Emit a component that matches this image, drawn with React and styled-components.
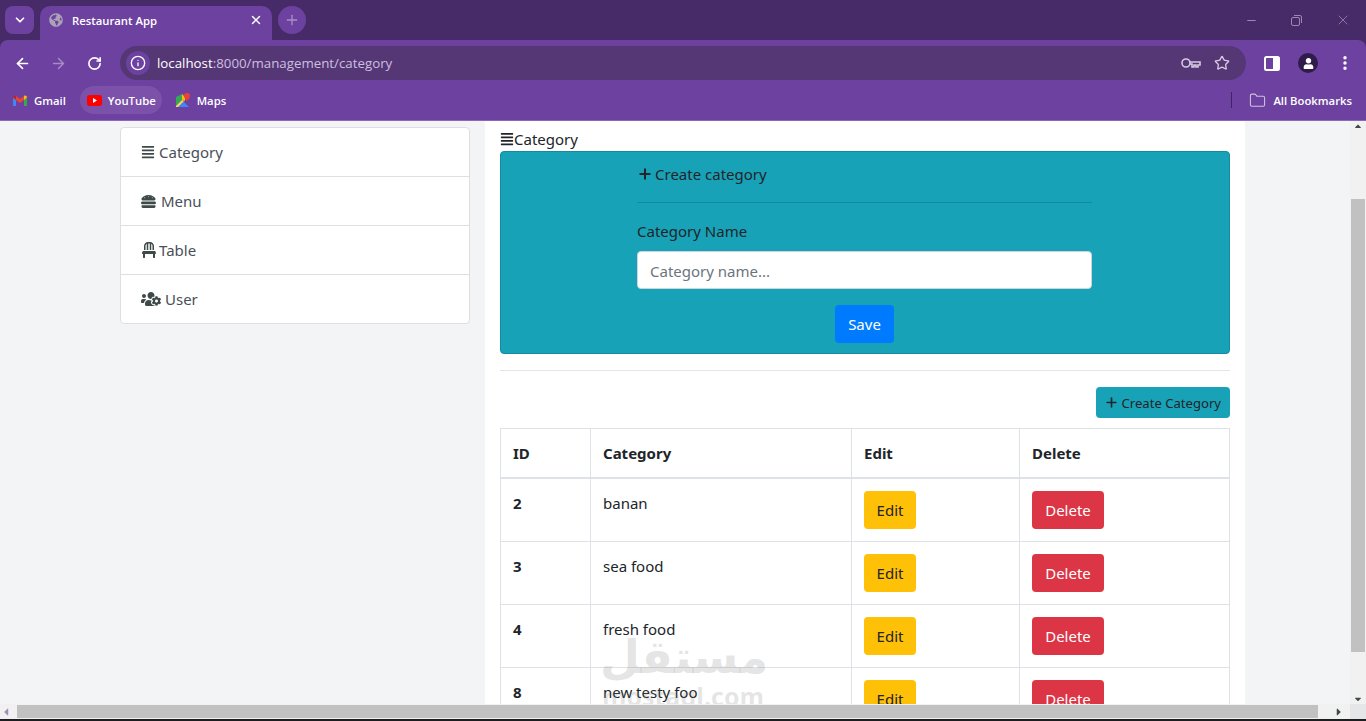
import React from "react";
import styled, { createGlobalStyle } from "styled-components";
import { ArrowLeft, ArrowRight, RotateCw, Info, Star, EllipsisVertical, Folder, ChevronDown, X, Plus, Minus } from "lucide-react";
import { FaAlignJustify, FaHamburger, FaChair, FaUsersCog, FaUser, FaGlobeAmericas, FaCaretLeft, FaCaretRight, FaCaretUp, FaCaretDown } from "react-icons/fa";

const GlobalStyle = createGlobalStyle`
  html, body { margin: 0; padding: 0; height: 100%; overflow: hidden; }
  * { box-sizing: border-box; }
`;

const Screen = styled.div`
  width: 1366px;
  height: 721px;
  display: flex;
  flex-direction: column;
  overflow: hidden;
  background: #1d1d1f;
  font-family: "Noto Sans", "Open Sans", sans-serif;
`;

/* browser chrome */
const Chrome = styled.header`
  flex: none;
  background: #472b69;
`;

const TabStrip = styled.div`
  height: 40px;
  display: flex;
  align-items: flex-start;
  padding: 6px 0 0 5px;
  color: #fff;
`;

const TabMenu = styled.div`
  width: 29px;
  height: 28px;
  border-radius: 8px;
  background: #6d41a0;
  display: flex;
  align-items: center;
  justify-content: center;
`;

const Tab = styled.div`
  width: 232px;
  height: 34px;
  margin-left: 6px;
  padding: 0 9px 6px 9px;
  border-radius: 10px 10px 0 0;
  background: #6d41a0;
  display: flex;
  align-items: center;
  gap: 9px;
  font: 600 11.3px "Open Sans", sans-serif;
`;

const TabTitle = styled.span`
  flex: 1;
`;

const NewTab = styled.div`
  width: 28px;
  height: 28px;
  margin-left: 6px;
  border-radius: 50%;
  background: #6d41a0;
  color: #a98fc6;
  display: flex;
  align-items: center;
  justify-content: center;
`;

const WindowControls = styled.div`
  margin-left: auto;
  margin-right: -1px;
  height: 28px;
  width: 138px;
  display: flex;
  align-items: center;
  justify-content: space-around;
  color: #9c88b4;
`;

const ToolbarArea = styled.div`
  background: #6d41a0;
  border-radius: 8px 8px 0 0;
  border-bottom: 1px solid #8d68b8;
`;

const Toolbar = styled.div`
  height: 46px;
  display: flex;
  align-items: center;
  padding: 0 0 0 13px;
  color: #fff;
`;

const NavButton = styled.div`
  width: 18px;
  height: 18px;
  margin-right: 18px;
  display: flex;
  align-items: center;
  justify-content: center;
  color: ${(p) => (p.$dim ? "#a78cc7" : "#fff")};
`;

const Omnibox = styled.div`
  width: 1126px;
  height: 34px;
  margin-left: -1px;
  border-radius: 17px;
  background: #553775;
  display: flex;
  align-items: center;
  padding: 0 16px 0 6px;
`;

const InfoChip = styled.div`
  width: 24px;
  height: 24px;
  border-radius: 50%;
  background: #6d41a0;
  display: flex;
  align-items: center;
  justify-content: center;
`;

const Url = styled.div`
  flex: 1;
  margin-left: 7px;
  font: 13.3px "Open Sans", sans-serif;
  color: #cdbfe0;
`;

const UrlHost = styled.span`
  color: #fff;
`;

const OmniIcon = styled.div`
  margin-left: 13px;
  display: flex;
  color: #d5cbe2;
`;

const ToolbarRight = styled.div`
  display: flex;
  align-items: center;
  margin-left: 18px;
  gap: 18px;
`;

const ProfileBadge = styled.div`
  width: 20px;
  height: 20px;
  border-radius: 50%;
  background: #2f1c4a;
  color: #fff;
  display: flex;
  align-items: center;
  justify-content: center;
`;

const BookmarkBar = styled.div`
  height: 34px;
  display: flex;
  align-items: flex-start;
  padding: 0 8px 0 6px;
  color: #fff;
  font: 600 11.3px/27px "Open Sans", sans-serif;
`;

const Bookmark = styled.div`
  height: 28px;
  padding: 0 6px 0 7px;
  margin-right: ${(p) => p.$gap}px;
  border-radius: 14px;
  background: ${(p) => (p.$active ? "#7b51aa" : "transparent")};
  display: flex;
  align-items: center;
  gap: ${(p) => p.$iconGap || 6}px;
`;

const BarSeparator = styled.div`
  width: 1px;
  height: 16px;
  margin: 6px 10px 0 auto;
  background: #3f2560;
`;

/* page */
const Viewport = styled.div`
  flex: none;
  height: 583px;
  display: flex;
  overflow: hidden;
  position: relative;
`;

const Page = styled.div`
  flex: 1;
  display: flex;
  align-items: flex-start;
  padding-left: 120px;
  background: #f3f4f6;
  font-size: 15px;
  line-height: 24px;
  color: #212529;
  overflow: hidden;
`;

const Sidebar = styled.nav`
  width: 350px;
  margin-top: 6px;
  background: #fff;
  border: 1px solid #dfdfe1;
  border-radius: 4px;
`;

const SideItem = styled.div`
  height: ${(p) => (p.$last ? 48 : 49)}px;
  padding: 0 20px;
  display: flex;
  align-items: center;
  gap: ${(p) => p.$gap || 4}px;
  color: #495057;
  border-bottom: ${(p) => (p.$last ? "0" : "1px solid #dfdfe1")};
  svg { color: #3f4a48; }
`;

const Main = styled.main`
  width: 760px;
  min-height: 900px;
  margin-left: 15px;
  padding: 7px 15px 0;
  background: #fff;
`;

const Heading = styled.div`
  display: flex;
  align-items: center;
  height: 21px;
  margin-bottom: 2px;
`;

const FormPanel = styled.section`
  height: 203px;
  padding: 10px 137px 0 136px;
  background: #17a2b8;
  border: 1px solid #148b9e;
  border-radius: 4px;
`;

const FormTitle = styled.div`
  display: flex;
  align-items: center;
  gap: 2px;
  height: 24px;
`;

const FormRule = styled.hr`
  margin: 16px 0 16px;
  border: 0;
  border-top: 1px solid #148a9d;
`;

const FieldLabel = styled.label`
  display: block;
  margin-bottom: 8px;
`;

const TextInput = styled.input`
  width: 100%;
  height: 38px;
  padding: 1px 12px 0;
  border: 1px solid #ced4da;
  border-radius: 4px;
  background: #fff;
  font: inherit;
  &::placeholder { color: #6c757d; opacity: 1; }
`;

const FormActions = styled.div`
  display: flex;
  justify-content: center;
  margin-top: 16px;
`;

const Button = styled.button`
  width: ${(p) => p.$width}px;
  height: 38px;
  padding: 0;
  border: 0;
  border-radius: 4px;
  background: ${(p) => p.$bg};
  color: ${(p) => p.$color || "#fff"};
  font: inherit;
  line-height: 24px;
`;

const SmallButton = styled.button`
  height: 31px;
  padding: 0 9px 0 8px;
  border: 0;
  border-radius: 4px;
  background: #17a2b8;
  color: #212529;
  font: 13.1px "Noto Sans", sans-serif;
  display: flex;
  align-items: center;
  gap: 3px;
`;

const Divider = styled.hr`
  margin: 16px 0;
  border: 0;
  border-top: 1px solid #e4e4e6;
`;

const ActionRow = styled.div`
  display: flex;
  justify-content: flex-end;
  margin-bottom: 10px;
`;

const Table = styled.table`
  width: 729px;
  border-collapse: collapse;
  table-layout: fixed;
`;

const HeadCell = styled.th`
  height: 49px;
  padding: 0 12px;
  border: 1px solid #dee2e6;
  border-bottom-width: 2px;
  text-align: left;
  font-weight: 700;
`;

const Cell = styled.td`
  height: 63px;
  padding: 12px;
  border: 1px solid #dee2e6;
  vertical-align: top;
  line-height: 24px;
  font-weight: ${(p) => (p.$bold ? 700 : 400)};
`;

/* watermark over the page */
const Watermark = styled.div`
  position: absolute;
  left: 600px;
  top: 510px;
  width: 166px;
  text-align: center;
  color: rgba(120, 120, 120, 0.2);
  pointer-events: none;
`;

const WatermarkArabic = styled.div`
  font: 700 46px/52px "DejaVu Sans", sans-serif;
`;

const WatermarkLatin = styled.div`
  font: 700 25px/26px "Open Sans", sans-serif;
`;

/* scrollbars */
const VScroll = styled.div`
  flex: none;
  width: 16px;
  background: #f1f1f1;
  display: flex;
  flex-direction: column;
  align-items: center;
  color: #3f4a48;
`;

const VThumb = styled.div`
  width: 14px;
  height: 453px;
  margin: 68px 0 auto;
  background: #c1c1c1;
`;

const HScroll = styled.div`
  flex: none;
  height: 15px;
  background: #f1f1f1;
  display: flex;
  align-items: center;
  color: #a08fb3;
`;

const HThumb = styled.div`
  width: 1301px;
  height: 13px;
  margin-left: 5px;
  margin-right: auto;
  background: #c1c1c1;
`;

const ScrollCorner = styled.div`
  width: 16px;
  height: 15px;
  margin-left: 5px;
  background: #e4e6e8;
`;

const rows = [
  { id: 2, name: "banan" },
  { id: 3, name: "sea food" },
  { id: 4, name: "fresh food" },
  { id: 8, name: "new testy foo" },
];

const GmailIcon = () => (
  <svg width="14" height="11" viewBox="0 0 14 11" fill="none">
    <path d="M0 2v8a1 1 0 0 0 1 1h2V4z" fill="#4285f4" />
    <path d="M14 2v8a1 1 0 0 1-1 1h-2V4z" fill="#34a853" />
    <path d="M3 5V1L7 4l4-3v4L7 8z" fill="#ea4335" />
    <path d="M0 2.5C0 .6 2 0 3 1v4z" fill="#c5221f" />
    <path d="M14 2.5C14 .6 12 0 11 1v4z" fill="#fbbc04" />
  </svg>
);

const YoutubeIcon = () => (
  <svg width="15" height="11" viewBox="0 0 15 11">
    <rect width="15" height="11" rx="2.5" fill="#f00" />
    <path d="M6 3l4 2.5L6 8z" fill="#fff" />
  </svg>
);

const MapsIcon = () => (
  <svg width="15" height="15" viewBox="0 0 15 15">
    <path d="M0 4l6-3v6L0 13z" fill="#34a853" />
    <path d="M6 1l3 3v4L6 7z" fill="#fbbc04" />
    <path d="M0 14l7-6 6 6z" fill="#4285f4" />
    <path d="M0 13l6-6 2 1-6 6H0z" fill="#fbd75b" />
    <path d="M11 0a3 3 0 0 1 3 3c0 2-3 5-3 5S8 5 8 3a3 3 0 0 1 3-3z" fill="#ea4335" />
  </svg>
);

const KeyIcon = () => (
  <svg width="20" height="12" viewBox="0 0 20 12" fill="none" stroke="currentColor" strokeWidth="1.6">
    <circle cx="5" cy="6" r="4" />
    <path d="M9 5h10v3h-2v2h-2V8h-2v2h-2V7H9" />
  </svg>
);

const PanelIcon = () => (
  <svg width="16" height="15" viewBox="0 0 16 15">
    <rect x="1" y="1" width="14" height="13" rx="1.5" fill="none" stroke="#fff" strokeWidth="2" />
    <rect x="9" y="1" width="6" height="13" fill="#fff" />
  </svg>
);

const RestoreIcon = () => (
  <svg width="11" height="11" viewBox="0 0 11 11" fill="none" stroke="currentColor">
    <rect x="0.5" y="2.5" width="8" height="8" rx="1.5" />
    <path d="M3 .5h6a1.5 1.5 0 0 1 1.5 1.5v6" />
  </svg>
);

export default function App() {
  return (
    <Screen>
      <GlobalStyle />
      <Chrome>
        <TabStrip>
          <TabMenu>
            <ChevronDown size={14} strokeWidth={3} />
          </TabMenu>
          <Tab>
            <FaGlobeAmericas size={14} color="#a9a3b5" />
            <TabTitle>Restaurant App</TabTitle>
            <X size={14} strokeWidth={2.5} />
          </Tab>
          <NewTab>
            <Plus size={16} />
          </NewTab>
          <WindowControls>
            <Minus size={13} />
            <RestoreIcon />
            <X size={16} strokeWidth={1.2} />
          </WindowControls>
        </TabStrip>
        <ToolbarArea>
          <Toolbar>
            <NavButton>
              <ArrowLeft size={17} strokeWidth={2.4} />
            </NavButton>
            <NavButton $dim>
              <ArrowRight size={17} strokeWidth={2} />
            </NavButton>
            <NavButton>
              <RotateCw size={15} strokeWidth={2.6} />
            </NavButton>
            <Omnibox>
              <InfoChip>
                <Info size={16} strokeWidth={2} />
              </InfoChip>
              <Url>
                <UrlHost>localhost</UrlHost>:8000/management/category
              </Url>
              <OmniIcon>
                <KeyIcon />
              </OmniIcon>
              <OmniIcon>
                <Star size={16} strokeWidth={2} />
              </OmniIcon>
            </Omnibox>
            <ToolbarRight>
              <PanelIcon />
              <ProfileBadge>
                <FaUser size={11} />
              </ProfileBadge>
              <EllipsisVertical size={18} strokeWidth={2.6} />
            </ToolbarRight>
          </Toolbar>
          <BookmarkBar>
            <Bookmark $gap={8} $iconGap={7}>
              <GmailIcon />
              Gmail
            </Bookmark>
            <Bookmark $active $gap={7}>
              <YoutubeIcon />
              YouTube
            </Bookmark>
            <Bookmark $gap={0} $iconGap={6}>
              <MapsIcon />
              Maps
            </Bookmark>
            <BarSeparator />
            <Bookmark $gap={0} $iconGap={7}>
              <Folder size={17} strokeWidth={1.5} color="#cfc2de" />
              All Bookmarks
            </Bookmark>
          </BookmarkBar>
        </ToolbarArea>
      </Chrome>

      <Viewport>
        <Page>
          <Sidebar>
            <SideItem>
              <FaAlignJustify size={14} />
              Category
            </SideItem>
            <SideItem $gap={5}>
              <FaHamburger size={15} />
              Menu
            </SideItem>
            <SideItem $gap={2}>
              <FaChair size={16} />
              Table
            </SideItem>
            <SideItem $last>
              <FaUsersCog size={20} />
              User
            </SideItem>
          </Sidebar>
          <Main>
            <Heading>
              <FaAlignJustify size={14} />
              Category
            </Heading>
            <FormPanel>
              <FormTitle>
                <Plus size={16} strokeWidth={3} />
                Create category
              </FormTitle>
              <FormRule />
              <FieldLabel>Category Name</FieldLabel>
              <TextInput placeholder="Category name..." />
              <FormActions>
                <Button $bg="#007bff" $width={59}>Save</Button>
              </FormActions>
            </FormPanel>
            <Divider />
            <ActionRow>
              <SmallButton>
                <Plus size={15} strokeWidth={2.6} />
                Create Category
              </SmallButton>
            </ActionRow>
            <Table>
              <colgroup>
                <col width="90" />
                <col width="261" />
                <col width="168" />
                <col width="210" />
              </colgroup>
              <thead>
                <tr>
                  <HeadCell>ID</HeadCell>
                  <HeadCell>Category</HeadCell>
                  <HeadCell>Edit</HeadCell>
                  <HeadCell>Delete</HeadCell>
                </tr>
              </thead>
              <tbody>
                {rows.map((row) => (
                  <tr key={row.id}>
                    <Cell $bold>{row.id}</Cell>
                    <Cell>{row.name}</Cell>
                    <Cell>
                      <Button $bg="#ffc107" $color="#212529" $width={52}>Edit</Button>
                    </Cell>
                    <Cell>
                      <Button $bg="#dc3545" $width={72}>Delete</Button>
                    </Cell>
                  </tr>
                ))}
              </tbody>
            </Table>
          </Main>
        </Page>
        <VScroll>
          <FaCaretUp size={10} />
          <VThumb />
          <FaCaretDown size={10} />
        </VScroll>
        <Watermark>
          <WatermarkArabic>مستقل</WatermarkArabic>
          <WatermarkLatin>mostaql.com</WatermarkLatin>
        </Watermark>
      </Viewport>

      <HScroll>
        <FaCaretLeft size={12} />
        <HThumb />
        <FaCaretRight size={12} color="#3f4a48" />
        <ScrollCorner />
      </HScroll>
    </Screen>
  );
}
